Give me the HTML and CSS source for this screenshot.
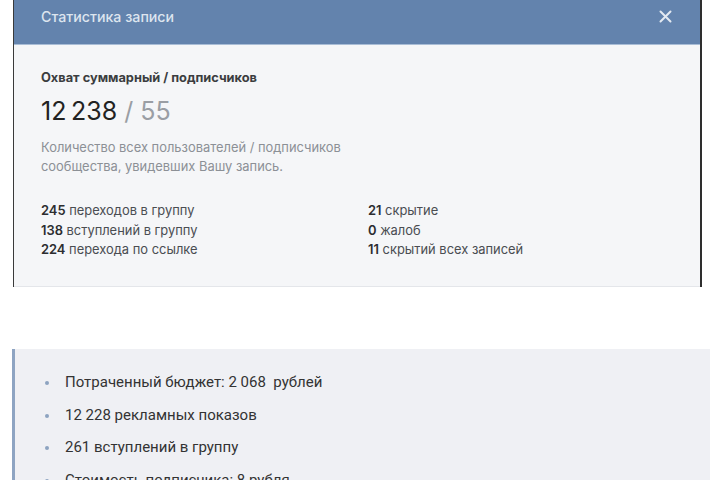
FILE: index.html
```html
<!DOCTYPE html>
<html lang="ru">
<head>
  <meta charset="UTF-8" />
  <title>Статистика записи</title>
  <link rel="stylesheet" href="styles.css">
</head>
<body>

<div class="modal">
  <div class="modal-header">
    <span class="modal-title">Статистика записи</span>
    <svg class="close" width="13" height="13" viewBox="0 0 13 13">
      <path d="M1.5 1.5 L11.5 11.5 M11.5 1.5 L1.5 11.5" stroke="#e4eaf2" stroke-width="2" stroke-linecap="round" />
    </svg>
  </div>
  <div class="modal-body">
    <div class="reach-title">Охват суммарный / подписчиков</div>
    <div class="reach-value">12&#8239;238 <span class="muted">/ 55</span></div>
    <div class="reach-desc">Количество всех пользователей / подписчиков<br>сообщества, увидевших Вашу запись.</div>
    <div class="stats">
      <div class="stats-col">
        <div><b>245</b> переходов в группу</div>
        <div><b>138</b> вступлений в группу</div>
        <div><b>224</b> перехода по ссылке</div>
      </div>
      <div class="stats-col">
        <div><b>21</b> скрытие</div>
        <div><b>0</b> жалоб</div>
        <div><b>11</b> скрытий всех записей</div>
      </div>
    </div>
  </div>
</div>

<div class="summary">
  <ul>
    <li>Потраченный бюджет: 2 068&nbsp; рублей</li>
    <li>12 228 рекламных показов</li>
    <li>261 вступлений в группу</li>
    <li>Стоимость подписчика: 8 рубля</li>
  </ul>
</div>

</body>
</html>
```

FILE: styles.css
```css
body {
  margin: 0;
  background: #fff;
  font-family: Roboto, "Noto Sans", sans-serif;
  overflow: hidden;
}
.modal {
  margin-left: 13px;
  width: 686px;
  border-left: 1px solid #3a3a3a;
  border-right: 2px solid #2e2e2e;
  font-family: Inter, Roboto, sans-serif;
}
.modal-header {
  height: 45px;
  background: #6383ad;
  border-bottom: 1px solid #a9bdd6;
  display: flex;
  align-items: center;
  justify-content: space-between;
  padding: 0 28px 0 27px;
  box-sizing: border-box;
}
.modal-title {
  color: #dde5ef;
  font-size: 14.2px;
  font-weight: 500;
  margin-top: -11px;
}
.close {
  margin-top: -11px;
}
.modal-body {
  background: #f5f6f8;
  border-bottom: 1px solid #e4e6ea;
  padding: 25px 27px 0;
  height: 242px;
  box-sizing: border-box;
}
.reach-title {
  font-size: 12.8px;
  line-height: 16px;
  font-weight: 700;
  color: #3b3d40;
}
.reach-value {
  font-size: 25px;
  line-height: 30px;
  color: #222;
  margin-top: 10px;
}
.reach-value .muted {
  color: #9a9ea4;
}
.reach-desc {
  font-size: 12.9px;
  color: #8c9096;
  line-height: 19px;
  margin-top: 12px;
}
.stats {
  display: flex;
  margin-top: 25px;
  font-size: 12.9px;
  color: #4a4d52;
  line-height: 19.5px;
}
.stats-col {
  width: 327px;
  flex-shrink: 0;
}
.stats b {
  font-weight: 600;
  color: #2c2d30;
}
.summary {
  margin: 62px 0 0 12px;
  width: 698px;
  background: #eff0f4;
  border-left: 3px solid #8ea4c2;
  box-sizing: border-box;
  padding: 17px 0 0;
}
.summary ul {
  margin: 0;
  padding: 0 0 0 30px;
  list-style: none;
}
.summary li {
  font-size: 15px;
  color: #333;
  height: 32.5px;
  line-height: 32px;
  position: relative;
  padding-left: 20px;
}
.summary li::before {
  content: "";
  position: absolute;
  left: 0;
  top: 15px;
  width: 4px;
  height: 4px;
  border-radius: 50%;
  background: #8da3c0;
}
```
